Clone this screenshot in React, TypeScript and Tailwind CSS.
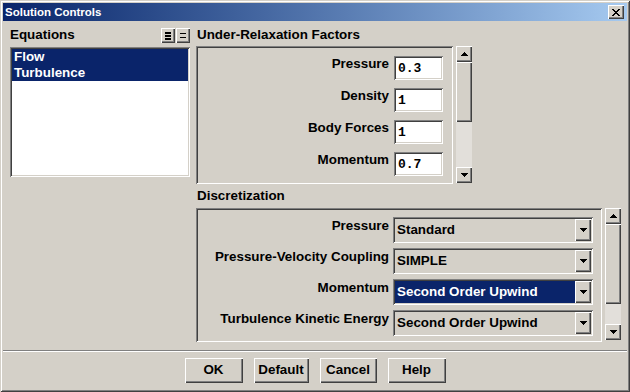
import React from "react";

const SUNKEN =
  "shadow-[inset_1px_1px_0_#808080,inset_-1px_-1px_0_#ffffff,inset_2px_2px_0_#404040,inset_-2px_-2px_0_#d4d0c8]";
const RAISED =
  "shadow-[inset_1px_1px_0_#ffffff,inset_-1px_-1px_0_#404040,inset_-2px_-2px_0_#808080]";

function Arrow({ dir }: { dir: "up" | "down" }) {
  return (
    <svg width="7" height="4" viewBox="0 0 7 4" shapeRendering="crispEdges">
      {dir === "up" ? (
        <g fill="#000">
          <rect x="3" y="0" width="1" height="1" />
          <rect x="2" y="1" width="3" height="1" />
          <rect x="1" y="2" width="5" height="1" />
          <rect x="0" y="3" width="7" height="1" />
        </g>
      ) : (
        <g fill="#000">
          <rect x="0" y="0" width="7" height="1" />
          <rect x="1" y="1" width="5" height="1" />
          <rect x="2" y="2" width="3" height="1" />
          <rect x="3" y="3" width="1" height="1" />
        </g>
      )}
    </svg>
  );
}

function ScrollBar({ height, thumb }: { height: number; thumb: number }) {
  return (
    <div className="w-[16px] flex flex-col" style={{ height }}>
      <div className={"h-[16px] bg-[#d4d0c8] flex items-center justify-center " + RAISED}>
        <Arrow dir="up" />
      </div>
      <div className={"bg-[#d4d0c8] " + RAISED} style={{ height: thumb }} />
      <div className="flex-1 bg-[#e2dfda]" />
      <div className={"h-[16px] bg-[#d4d0c8] flex items-center justify-center " + RAISED}>
        <Arrow dir="down" />
      </div>
    </div>
  );
}

function NumField({ label, value }: { label: string; value: string }) {
  return (
    <div className="flex justify-end items-start gap-[5px] h-[24px]">
      <span className="text-[13.4px] leading-[16px] font-bold text-black">{label}</span>
      <div
        className={
          "w-[49px] h-[24px] bg-white flex items-center pl-[4px] pt-[1px] font-['Liberation_Mono',monospace] font-bold text-[13px] text-black " +
          SUNKEN
        }
      >
        {value}
      </div>
    </div>
  );
}

function Combo({ label, value, selected }: { label: string; value: string; selected?: boolean }) {
  return (
    <div className="flex justify-end items-start gap-[4px] h-[26px]">
      <span className="text-[13.4px] leading-[16px] mt-[1px] font-bold text-black">{label}</span>
      <div className={"w-[200px] h-[26px] bg-[#d4d0c8] flex p-[2px] " + SUNKEN}>
        <div
          className={
            "flex-1 flex items-center pl-[2px] text-[13.4px] font-bold " +
            (selected ? "bg-[#0a246a] text-white" : "text-black")
          }
        >
          {value}
        </div>
        <div className={"w-[16px] bg-[#d4d0c8] flex items-center justify-center " + RAISED}>
          <Arrow dir="down" />
        </div>
      </div>
    </div>
  );
}

function Btn({ label, w }: { label: string; w: string }) {
  return (
    <div
      className={
        "h-[25px] bg-[#d4d0c8] flex items-center justify-center text-[13.4px] font-bold text-black " +
        w +
        " " +
        RAISED
      }
    >
      {label}
    </div>
  );
}

export default function App() {
  return (
    <div
      className={
        "w-[630px] h-[392px] bg-[#d4d0c8] p-[3px] flex flex-col overflow-hidden font-['Liberation_Sans',Arial,sans-serif] shadow-[inset_1px_1px_0_#d4d0c8,inset_-1px_-1px_0_#404040,inset_2px_2px_0_#ffffff,inset_-2px_-2px_0_#808080]"
      }
    >
      {/* Title bar */}
      <div className="h-[18px] bg-linear-to-r from-[#0a246a] to-[#a6caf0] flex items-center justify-between pl-[2px] pr-[3px]">
        <span className="text-white font-bold text-[11.5px] leading-[18px]">Solution Controls</span>
        <div className={"w-[16px] h-[14px] bg-[#d4d0c8] flex items-center justify-center " + RAISED}>
          <svg width="8" height="7" viewBox="0 0 8 7" shapeRendering="crispEdges">
            <g fill="#000">
              <rect x="0" y="0" width="2" height="1" />
              <rect x="6" y="0" width="2" height="1" />
              <rect x="1" y="1" width="2" height="1" />
              <rect x="5" y="1" width="2" height="1" />
              <rect x="2" y="2" width="4" height="1" />
              <rect x="3" y="3" width="2" height="1" />
              <rect x="2" y="4" width="4" height="1" />
              <rect x="1" y="5" width="2" height="1" />
              <rect x="5" y="5" width="2" height="1" />
              <rect x="0" y="6" width="2" height="1" />
              <rect x="6" y="6" width="2" height="1" />
            </g>
          </svg>
        </div>
      </div>

      {/* Main */}
      <div className="flex pl-[7px] pt-[6px]">
        {/* Left column */}
        <div className="w-[180px] mr-[6px] flex flex-col">
          <div className="h-[16px] flex items-center justify-between">
            <span className="text-[13.4px] leading-[16px] font-bold text-black">Equations</span>
            <div className="flex gap-[1px] mt-[1px]">
              <div className={"w-[14px] h-[15px] bg-[#d4d0c8] flex items-center justify-center " + RAISED}>
                <svg width="6" height="8" viewBox="0 0 6 8" shapeRendering="crispEdges">
                  <g fill="#000">
                    <rect x="0" y="0" width="6" height="2" />
                    <rect x="0" y="3" width="6" height="2" />
                    <rect x="0" y="6" width="6" height="2" />
                  </g>
                </svg>
              </div>
              <div className={"w-[14px] h-[15px] bg-[#d4d0c8] flex items-center justify-center " + RAISED}>
                <svg width="6" height="5" viewBox="0 0 6 5" shapeRendering="crispEdges">
                  <g fill="#000">
                    <rect x="0" y="0" width="6" height="1" />
                    <rect x="0" y="4" width="6" height="1" />
                  </g>
                </svg>
              </div>
            </div>
          </div>
          <div className={"mt-[4px] h-[130px] bg-white p-[2px] flex flex-col " + SUNKEN}>
            <div className="h-[16px] leading-[16px] bg-[#0a246a] text-white font-bold text-[13.4px] pl-[2px]">Flow</div>
            <div className="h-[16px] leading-[16px] bg-[#0a246a] text-white font-bold text-[13.4px] pl-[2px]">
              Turbulence
            </div>
          </div>
        </div>

        {/* Right column */}
        <div className="w-[425px] flex flex-col">
          <div className="h-[16px] leading-[16px] pl-[1px] text-[13.4px] font-bold text-black">
            Under-Relaxation Factors
          </div>
          <div className="mt-[3px] flex">
            <div className={"w-[257px] h-[138px] pt-[10px] pr-[10px] flex flex-col gap-[8px] " + SUNKEN}>
              <NumField label="Pressure" value="0.3" />
              <NumField label="Density" value="1" />
              <NumField label="Body Forces" value="1" />
              <NumField label="Momentum" value="0.7" />
            </div>
            <div className="ml-[3px]">
              <ScrollBar height={137} thumb={60} />
            </div>
          </div>

          <div className="mt-[4px] h-[16px] leading-[16px] pl-[1px] text-[13.4px] font-bold text-black">
            Discretization
          </div>
          <div className="mt-[4px] flex">
            <div className={"w-[406px] h-[134px] pt-[9px] pr-[9px] flex flex-col gap-[5px] " + SUNKEN}>
              <Combo label="Pressure" value="Standard" />
              <Combo label="Pressure-Velocity Coupling" value="SIMPLE" />
              <Combo label="Momentum" value="Second Order Upwind" selected />
              <Combo label="Turbulence Kinetic Energy" value="Second Order Upwind" />
            </div>
            <div className="ml-[3px]">
              <ScrollBar height={132} thumb={80} />
            </div>
          </div>
        </div>
      </div>

      {/* Separator */}
      <div className="mt-[8px] h-[2px] border-t border-t-[#808080] border-b border-b-white" />

      {/* Buttons */}
      <div className="mt-[6px] flex justify-center gap-[11px]">
        <Btn label="OK" w="w-[58px]" />
        <Btn label="Default" w="w-[55px]" />
        <Btn label="Cancel" w="w-[57px]" />
        <Btn label="Help" w="w-[58px]" />
      </div>
    </div>
  );
}
